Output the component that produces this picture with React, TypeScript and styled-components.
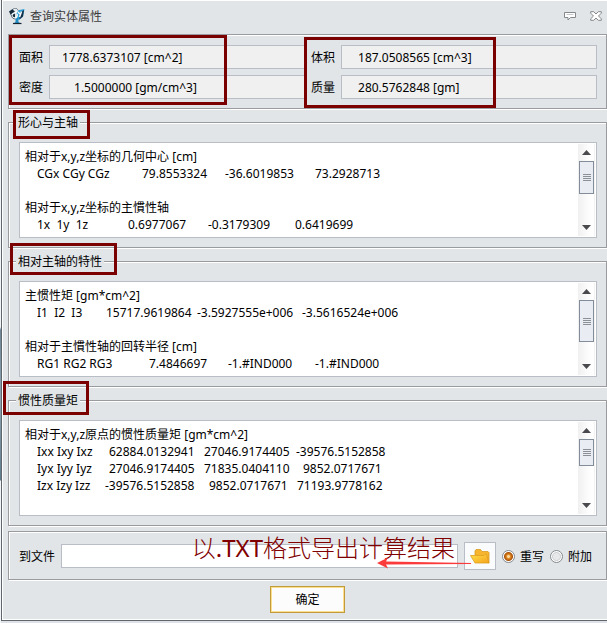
import React from "react";
import styled, { createGlobalStyle } from "styled-components";

const GlobalStyle = createGlobalStyle`
  * { box-sizing: border-box; }
  body {
    margin: 0;
    background: #dfe3e8;
    overflow-x: hidden;
  }
  body, button, input {
    font-family: "Noto Sans", "Noto Sans CJK SC", sans-serif;
    font-size: 12px;
    line-height: 17px;
    color: #000;
  }
`;

const Backdrop = styled.div`
  padding: 0 0 2px 1px;
  background: linear-gradient(#f2f4f6 0 327px, #6f8796 330px, #8fa5b2 400px, #5f7d8e 480px, #f2f4f6 481px);
  background-size: 1px 100%;
  background-repeat: no-repeat;
`;

const Window = styled.main`
  border: solid #5f666e;
  border-width: 0 0 1px 1px;
  background: #e1e5e8;
  box-shadow: inset 1px 1px #fff, inset 0 -1px #fff;
  padding: 0 0 7px 6px;
`;

const TitleBar = styled.header`
  display: flex;
  align-items: center;
  height: 34px;
  padding: 0 5px 2px 1px;
`;

const Title = styled.h1`
  flex: 1;
  margin: 0 0 0 5px;
  font-size: 12px;
  font-weight: 400;
  color: #3c3c3c;
`;

const TitleButton = styled.button`
  display: flex;
  padding: 0;
  border: 0;
  background: none;
  margin-left: 14px;
`;

const Panel = styled.section`
  position: relative;
  border: 1px solid #999b9e;
  box-shadow: inset 1px 1px #fff, 1px 1px #fff;
  padding: 10px 9px 9px 10px;
`;

const FieldGrid = styled(Panel)`
  display: grid;
  grid-template-columns: auto 1fr auto 1fr;
  gap: 6px;
  align-items: center;
`;

const ValueField = styled.input<{ $indent: number }>`
  width: 100%;
  min-width: 0;
  height: 24px;
  border: 1px solid #b9bdc6;
  background: #f0f0f0;
  padding: 1px 4px 0 ${(p) => p.$indent}px;
  outline: none;
`;

const Group = styled.fieldset`
  position: relative;
  min-width: 0;
  margin: 5px 0 0;
  border: 1px solid #999b9e;
  box-shadow: inset 1px 1px #fff, 1px 1px #fff;
  padding: 11px 9px 9px 10px;
`;

const Legend = styled.legend`
  margin-left: -3px;
  padding: 0 2px;
  background: #e1e5e8;
`;

const ResultBox = styled.div`
  display: flex;
  height: 96px;
  border: 1px solid #b9bdc6;
  background: #fff;
  padding: 1px;
`;

const ResultText = styled.div`
  flex: 1;
  min-width: 0;
  overflow: hidden;
  padding: 4px 0 0 4px;
  white-space: pre;
`;

const Line = styled.div`
  height: 17px;
`;

const ValueLine = styled(Line)<{ $columns: string }>`
  display: grid;
  grid-template-columns: ${(p) => p.$columns};
  padding-left: 12px;
`;

const ScrollTrack = styled.div`
  display: flex;
  flex-direction: column;
  width: 17px;
  padding: 0 1px;
  background: linear-gradient(90deg, #f0f0f0, #fcfcfc 60%, #fff 90%, #ededed);
`;

const ArrowButton = styled.button`
  display: flex;
  justify-content: center;
  align-items: center;
  height: 17px;
  padding: 0;
  border: 0;
  background: none;
`;

const Thumb = styled.div<{ $size: number }>`
  display: flex;
  justify-content: center;
  align-items: center;
  height: ${(p) => p.$size}px;
  border: 1px solid #838c99;
  background: #e9edf3;
`;

const TrackSpace = styled.div`
  flex: 1;
`;

const FilePanel = styled(Panel)`
  display: flex;
  align-items: center;
  gap: 6px;
  margin-top: 5px;
`;

const PathInput = styled.input`
  flex: 1;
  min-width: 0;
  height: 24px;
  border: 1px solid #b9bdc6;
  background: #fff;
  outline: none;
`;

const BrowseButton = styled.button`
  display: flex;
  justify-content: center;
  align-items: center;
  width: 32px;
  height: 28px;
  padding: 0;
  border: 1px solid #b9bdc6;
  background: #fafbfc;
`;

const RadioLabel = styled.label`
  display: flex;
  align-items: center;
  gap: 5px;
  & + & { padding-right: 5px; }
`;

const Radio = styled.input`
  appearance: none;
  width: 13px;
  height: 13px;
  margin: 0;
  border: 1px solid #85888c;
  border-radius: 50%;
  background: radial-gradient(circle, #e6e8ea 0 3px, #cfd2d5 4px, #fff 5px);
  &:checked {
    background: radial-gradient(circle, #ffd9a0 0 1px, #e58a22 2px, #a8530c 4px, #fff 5px);
  }
`;

const Footer = styled.footer`
  display: flex;
  justify-content: center;
  padding: 6px 0 0;
`;

const OkButton = styled.button`
  width: 75px;
  height: 27px;
  padding: 0;
  border: 1px solid #c19a3c;
  box-shadow: inset 0 0 0 1px #fbdf8c;
  background: #fcfcfc;
`;

const Highlight = styled.div<{ $left: number; $top: number; $width: number; $height: number }>`
  position: absolute;
  left: ${(p) => p.$left}px;
  top: ${(p) => p.$top}px;
  width: ${(p) => p.$width}px;
  height: ${(p) => p.$height}px;
  border: 3px solid #7b0000;
  pointer-events: none;
`;

const Note = styled.div`
  position: absolute;
  right: 151px;
  top: 0;
  font-size: 24px;
  line-height: 32px;
  font-weight: 300;
  color: #800000;
  white-space: nowrap;
  pointer-events: none;
`;

const NoteFormat = styled.span`
  font-weight: 400;
`;

const NoteArrow = styled.svg`
  position: absolute;
  right: 134px;
  top: 25px;
  pointer-events: none;
`;

type TextLine = string | { columns: string; cells: string[] };

function ResultGroup({ title, lines, thumb, mark }: {
  title: string;
  lines: TextLine[];
  thumb: number;
  mark: [number, number, number, number];
}) {
  return (
    <Group>
      <Legend>{title}</Legend>
      <ResultBox>
        <ResultText>
          {lines.map((line, i) =>
            typeof line === "string" ? (
              <Line key={i}>{line}</Line>
            ) : (
              <ValueLine key={i} $columns={line.columns}>
                {line.cells.map((c, j) => <span key={j}>{c}</span>)}
              </ValueLine>
            )
          )}
        </ResultText>
        <ScrollTrack>
          <ArrowButton type="button" aria-label="向上滚动">
            <svg width="9" height="5" viewBox="0 0 9 5"><path d="M0 5 4.500 0 9 5z" fill="#4a4a4e" /></svg>
          </ArrowButton>
          <Thumb $size={thumb}>
            <svg width="8" height="7" viewBox="0 0 8 7" shapeRendering="crispEdges">
              <path d="M0 .5h8M0 2.500h8M0 4.500h8M0 6.500h8" stroke="#8b8f96" />
            </svg>
          </Thumb>
          <TrackSpace />
          <ArrowButton type="button" aria-label="向下滚动">
            <svg width="9" height="5" viewBox="0 0 9 5"><path d="M0 0h9L4.500 5z" fill="#4a4a4e" /></svg>
          </ArrowButton>
        </ScrollTrack>
      </ResultBox>
      <Highlight $left={mark[0]} $top={mark[1]} $width={mark[2]} $height={mark[3]} />
    </Group>
  );
}

const AppIcon = () => (
  <svg width="16" height="17" viewBox="0 0 16 17" aria-hidden="true">
    <path d="M0 3.500 3.500 1l2.500 3v6L3 9.500z" fill="#14293a" />
    <path d="M8 2.500 15.500 1 14 8.500 10 12 7.500 9z" fill="#2a9fd8" />
    <path d="M10.500 5 15 2l-1 6.500-3.500 3z" fill="#123047" />
    <path d="M6.500 10h3v4l2.500 1.500H4.500L6.500 14z" fill="#1f8cc4" />
    <path d="M4 15.500h8.500" stroke="#16242f" strokeWidth="1.200" />
    <path d="M4.500 1.500c1.500-2 4-1 4 1S5 4.500 3.500 6s0 4 2 4 3-2 2.500-4M9 4l3 3M12.500 3.500 10.500 9" fill="none" stroke="#f4f8fa" strokeWidth="1.600" />
    <path d="M4 1.200C5.500-.3 8.500 0 9 2.500M2.500 7c0 3 2 4 4 4" fill="none" stroke="#2a3e4c" strokeWidth=".7" />
  </svg>
);

const FolderIcon = () => (
  <svg width="20" height="15" viewBox="0 0 20 15" aria-hidden="true">
    <defs>
      <linearGradient id="folderFront" x1="0" y1="0" x2="1" y2="1">
        <stop offset="0" stopColor="#ffe14a" />
        <stop offset="1" stopColor="#f5a21c" />
      </linearGradient>
    </defs>
    <path d="M5 6V2l1-1.500h4.500L12 2.500h6l1 1V14z" fill="#f6b52c" stroke="#d99a22" strokeWidth=".8" />
    <path d="M.5 6.500h13.500l1.500-1.500h.8L19 14H5z" fill="url(#folderFront)" stroke="#e0a022" strokeWidth=".8" />
  </svg>
);

export default function App() {
  return (
    <>
      <GlobalStyle />
      <Backdrop>
        <Window>
          <TitleBar>
            <AppIcon />
            <Title>查询实体属性</Title>
            <TitleButton type="button" aria-label="反馈">
              <svg width="12" height="10" viewBox="0 0 12 10">
                <path d="M.5 1.500h11v5H6.500L4 9V6.500H.5z" fill="#fff" stroke="#85888b" />
                <path d="M2.500 3.500h7" stroke="#c5c8ca" />
              </svg>
            </TitleButton>
            <TitleButton type="button" aria-label="关闭">
              <svg width="12" height="10" viewBox="0 0 12 10">
                <path d="M.7.700h3L6 3 8.300.7h3v1.500L8.500 5l2.800 2.800v1.500h-3L6 7 3.700 9.300h-3V7.800L3.500 5 .7 2.200z" fill="#fff" stroke="#85888b" />
              </svg>
            </TitleButton>
          </TitleBar>

          <FieldGrid>
            <label htmlFor="area">面积</label>
            <ValueField id="area" $indent={12} readOnly value="1778.6373107 [cm^2]" />
            <label htmlFor="volume">体积</label>
            <ValueField id="volume" $indent={16} readOnly value="187.0508565 [cm^3]" />
            <label htmlFor="density">密度</label>
            <ValueField id="density" $indent={24} readOnly value="1.5000000 [gm/cm^3]" />
            <label htmlFor="mass">质量</label>
            <ValueField id="mass" $indent={16} readOnly value="280.5762848 [gm]" />
            <Highlight $left={0} $top={0} $width={218} $height={70} />
            <Highlight $left={295} $top={2} $width={192} $height={71} />
          </FieldGrid>

          <ResultGroup
            title="形心与主轴"
            thumb={33}
            mark={[4, -21, 77, 29]}
            lines={[
              "相对于x,y,z坐标的几何中心 [cm]",
              { columns: "105px 83px 90px 1fr", cells: ["CGx CGy CGz", "79.8553324", "-36.6019853", "73.2928713"] },
              "",
              "相对于x,y,z坐标的主慣性轴",
              { columns: "91px 80px 87px 1fr", cells: ["1x  1y  1z", "0.6977067", "-0.3179309", "0.6419699"] },
            ]}
          />
          <ResultGroup
            title="相对主轴的特性"
            thumb={42}
            mark={[1, -27, 107, 32]}
            lines={[
              "主惯性矩 [gm*cm^2]",
              { columns: "69px 91px 105px 1fr", cells: ["I1  I2  I3", "15717.9619864", "-3.5927555e+006", "-3.5616524e+006"] },
              "",
              "相对于主慣性轴的回转半径 [cm]",
              { columns: "112px 79px 87px 1fr", cells: ["RG1 RG2 RG3", "7.4846697", "-1.#IND000", "-1.#IND000"] },
            ]}
          />
          <ResultGroup
            title="惯性质量矩"
            thumb={27}
            mark={[-6, -28, 86, 34]}
            lines={[
              "相对于x,y,z原点的惯性质量矩 [gm*cm^2]",
              { columns: "72px 95px 92px 1fr", cells: ["Ixx Ixy Ixz", "62884.0132941", "27046.9174405", "-39576.5152858"] },
              { columns: "72px 95px 99px 1fr", cells: ["Iyx Iyy Iyz", "27046.9174405", "71835.0404110", "9852.0717671"] },
              { columns: "68px 104px 88px 1fr", cells: ["Izx Izy Izz", "-39576.5152858", "9852.0717671", "71193.9778162"] },
            ]}
          />

          <FilePanel>
            <label htmlFor="path">到文件</label>
            <PathInput id="path" type="text" />
            <BrowseButton type="button" aria-label="浏览文件夹">
              <FolderIcon />
            </BrowseButton>
            <RadioLabel>
              <Radio type="radio" name="mode" defaultChecked />
              重写
            </RadioLabel>
            <RadioLabel>
              <Radio type="radio" name="mode" />
              附加
            </RadioLabel>
            <Note>以<NoteFormat>.TXT</NoteFormat>格式导出计算结果</Note>
            <NoteArrow width="95" height="12" viewBox="0 0 95 12" aria-hidden="true">
              <path d="M0 6 11 .500 9 4.500 94 6v1L9 7.500 11 11.500z" fill="#fb3b3b" />
            </NoteArrow>
          </FilePanel>

          <Footer>
            <OkButton type="button">确定</OkButton>
          </Footer>
        </Window>
      </Backdrop>
    </>
  );
}
